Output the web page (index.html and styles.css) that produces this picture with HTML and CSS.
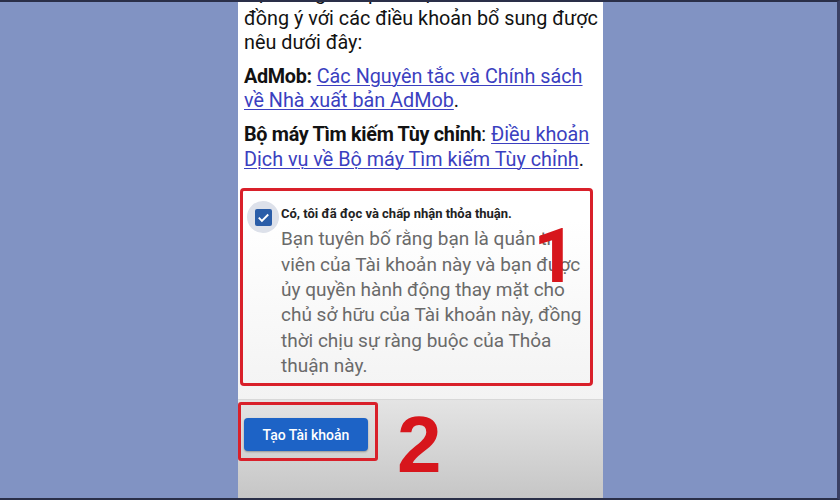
FILE: index.html
```html
<!DOCTYPE html>
<html lang="vi">
<head>
<meta charset="utf-8">
<link rel="stylesheet" href="styles.css">
</head>
<body>
<div class="frame">
  <div class="phone">
    <div class="content">
      <p class="para first">Bạn cũng cần phải đọc và<br>
        đồng ý với các điều khoản bổ sung được<br>nêu dưới đây:</p>
      <p class="para"><b>AdMob:</b> <a href="#">Các Nguyên tắc và Chính sách<br>về Nhà xuất bản AdMob</a>.</p>
      <p class="para"><b>Bộ máy Tìm kiếm Tùy chỉnh</b>: <a href="#">Điều khoản<br>Dịch vụ về Bộ máy Tìm kiếm Tùy chỉnh</a>.</p>
      <div class="agree">
        <div class="check-col">
          <span class="halo"><span class="box"><svg viewBox="0 0 18 18" width="17" height="17"><path d="M4 9.2l3.3 3.3L14 5.8" fill="none" stroke="#fff" stroke-width="2"/></svg></span></span>
        </div>
        <div class="agree-text">
          <div class="label">Có, tôi đã đọc và chấp nhận thỏa thuận.</div>
          <div class="desc">Bạn tuyên bố rằng bạn là quản trị<br>viên của Tài khoản này và bạn được<br>ủy quyền hành động thay mặt cho<br>chủ sở hữu của Tài khoản này, đồng<br>thời chịu sự ràng buộc của Thỏa<br>thuận này.</div>
        </div>
        <span class="num num1">1</span>
      </div>
    </div>
    <div class="footer">
      <div class="btn-box"><button class="btn">Tạo Tài khoản</button></div>
      <span class="num num2">2</span>
    </div>
  </div>
</div>
</body>
</html>
```
FILE: styles.css
```css
html, body {
  margin: 0;
  padding: 0;
}
body {
  width: 840px;
  height: 500px;
  overflow: hidden;
  background: #8193c3;
  font-family: Roboto, "Noto Sans", sans-serif;
}
.frame {
  box-sizing: border-box;
  width: 840px;
  height: 500px;
  border-top: 2px solid #2a2f48;
  border-right: 3px solid #3a4063;
  border-bottom: 2px solid #2a2f48;
  display: flex;
  padding-left: 238px;
}
.phone {
  width: 365px;
  height: 100%;
  display: flex;
  flex-direction: column;
  overflow: hidden;
}
.content {
  background: linear-gradient(#ffffff 0%, #ffffff 55%, #f3f3f3 100%);
  padding: 0 4px 0 6px;
  height: 398px;
  box-sizing: border-box;
  border-bottom: 1px solid #d8d8d8;
  white-space: nowrap;
}
.para {
  margin: 0 0 9px;
  font-size: 19.8px;
  line-height: 24.6px;
  color: #121212;
}
.para.first {
  margin-top: -20px;
}
.para b {
  font-weight: 700;
  letter-spacing: -0.3px;
}
.para a {
  color: #3b3fc0;
  text-decoration: underline;
  text-underline-offset: 2px;
  text-decoration-thickness: 1px;
}
.agree {
  position: relative;
  margin: 16px 6px 0 -4px;
  border: 3px solid #d9202a;
  border-radius: 4px;
  height: 198px;
  box-sizing: border-box;
  display: flex;
  padding: 10px 6px 0 4px;
}
.check-col {
  width: 34px;
  flex: none;
}
.halo {
  display: flex;
  width: 32px;
  height: 32px;
  border-radius: 50%;
  background: #dde1ea;
  align-items: center;
  justify-content: center;
}
.box {
  display: flex;
  width: 17px;
  height: 17px;
  background: #2a5da8;
  border-radius: 2px;
}
.agree-text {
  flex: 1;
  padding-top: 5px;
}
.label {
  font-size: 13px;
  font-weight: 700;
  color: #222;
  line-height: 16px;
}
.desc {
  margin-top: 4px;
  font-size: 19px;
  line-height: 25.4px;
  color: #6a6a6a;
}
.num {
  position: absolute;
  color: #d7161c;
  font-family: "Liberation Sans", Arial, sans-serif;
  font-weight: 700;
  font-size: 80px;
  line-height: 1;
}
.num1 {
  font-family: Roboto, sans-serif;
  font-size: 76px;
  left: 290px;
  top: 27px;
}
.footer {
  position: relative;
  flex: 1;
  background: linear-gradient(#e4e4e4, #c6c6c6);
  padding-top: 2px;
}
.btn-box {
  width: 140px;
  height: 59px;
  box-sizing: border-box;
  border: 3px solid #d9202a;
  border-radius: 3px;
  padding: 13px 0 0 3px;
}
.btn {
  display: block;
  width: 124px;
  height: 33px;
  border: none;
  border-radius: 4px;
  background: #1d63c6;
  color: #fff;
  font-family: Roboto, sans-serif;
  font-size: 14px;
  font-weight: 500;
  box-shadow: 0 1px 2px rgba(0,0,0,0.3);
}
.num2 {
  left: 159px;
  top: 5px;
}
```
